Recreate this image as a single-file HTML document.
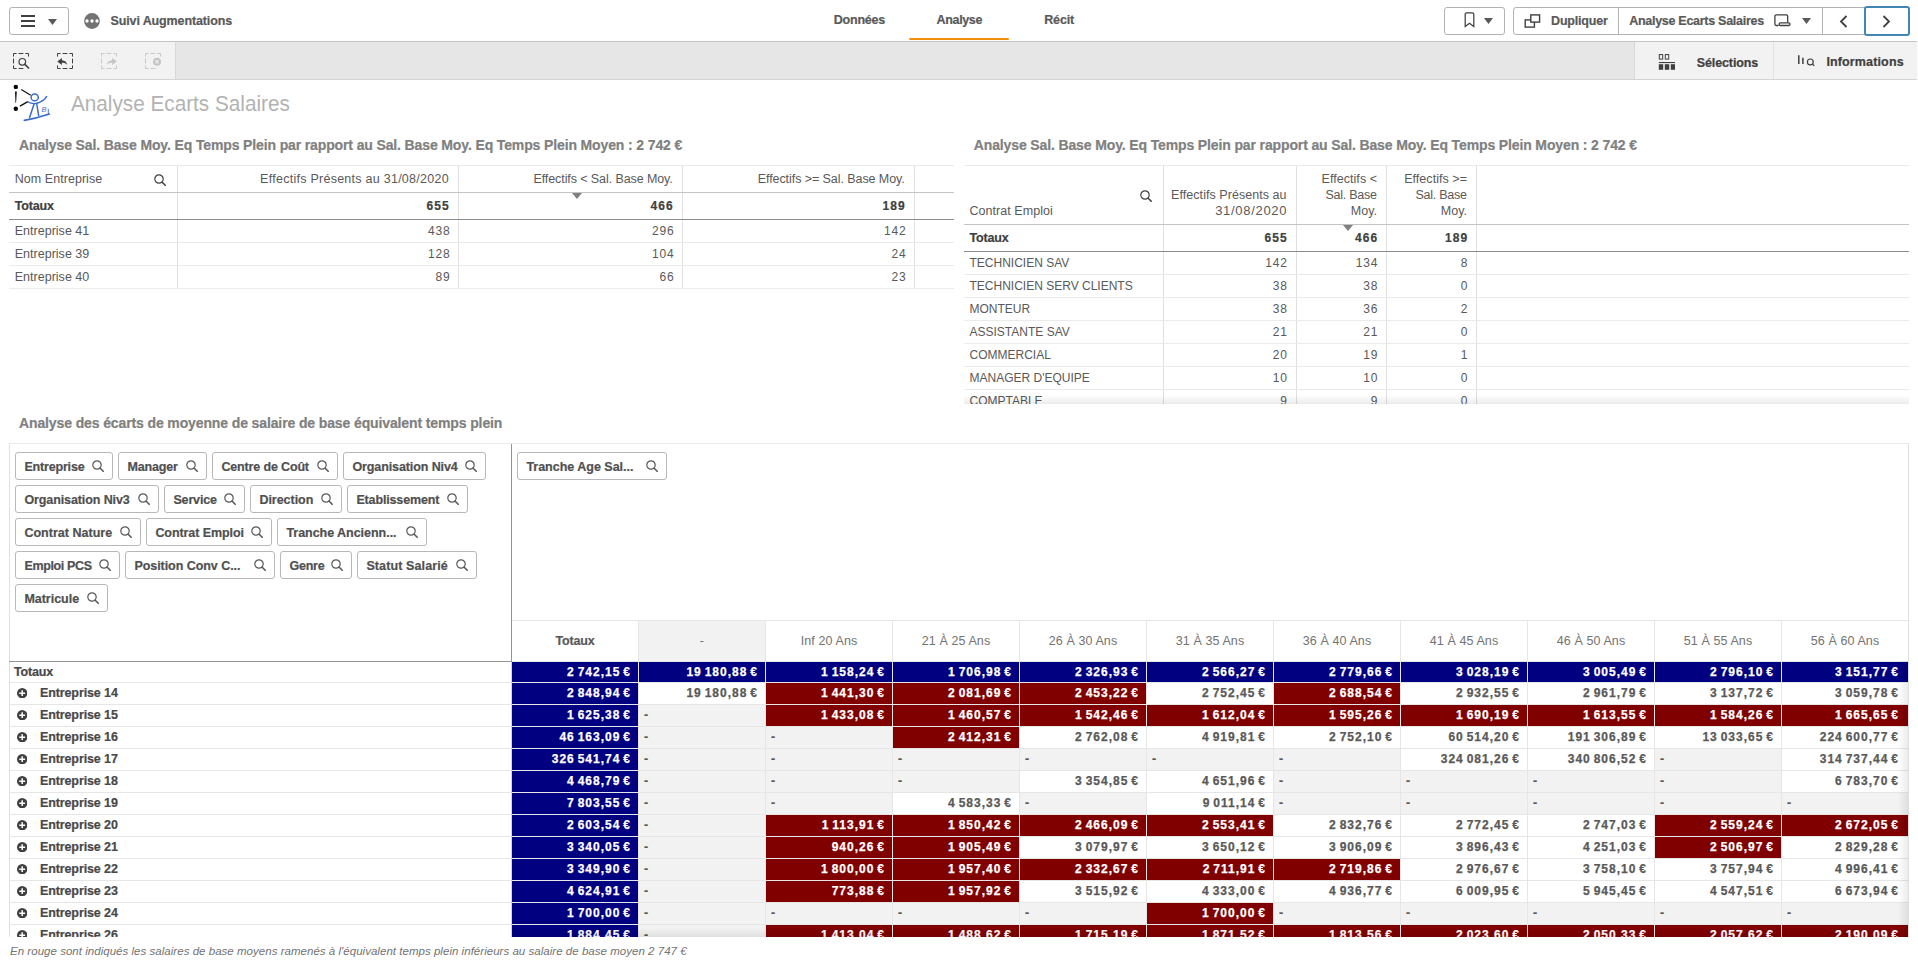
<!DOCTYPE html><html lang="fr"><head><meta charset="utf-8"><title>Suivi Augmentations</title><style>
*{box-sizing:border-box}
html,body{margin:0;padding:0}
body{width:1918px;height:967px;overflow:hidden;background:#fff;font-family:"Liberation Sans",sans-serif;color:#595959;position:relative}
.a{position:absolute}
.t{position:absolute;white-space:nowrap;line-height:1}
.b{font-weight:bold}
.r{text-align:right}
.btn{position:absolute;top:7px;height:28px;border:1px solid #b3b3b3;border-radius:3px;background:#fff}
.hl{position:absolute;height:1px}
.vl{position:absolute;width:1px}
.pill{position:absolute;height:28px;border:1px solid #b8b8b8;border-radius:3px;background:#fff}
.c{position:absolute;height:21px}
.N{background:#000080}
.R{background:#800000}
.G{background:#f2f2f2}
</style></head><body>
<div class="btn" style="left:9px;width:60px"></div>
<div class="a" style="left:21px;top:15px;width:14px;height:2px;background:#404040"></div><div class="a" style="left:21px;top:20px;width:14px;height:2px;background:#404040"></div><div class="a" style="left:21px;top:25px;width:14px;height:2px;background:#404040"></div>
<svg class="a" style="left:47.6px;top:19px" width="9" height="6" viewBox="0 0 9 6"><path d="M0 0h9L4.5 6z" fill="#595959"/></svg>
<svg class="a" style="left:84px;top:13px" width="17" height="17" viewBox="0 0 17 17"><circle cx="8" cy="8" r="7.9" fill="#737373"/><circle cx="3" cy="8" r="1.65" fill="#fff"/><circle cx="8" cy="8" r="1.65" fill="#fff"/><circle cx="13" cy="8" r="1.65" fill="#fff"/></svg>
<div class="t" style="top:14.75px;font-size:12.5px;color:#595959;letter-spacing:-0.12px;font-weight:bold;-webkit-text-stroke:0.2px #595959;left:110.5px;">Suivi Augmentations</div>
<div class="t" style="top:13.75px;font-size:12.5px;color:#595959;letter-spacing:-0.24px;font-weight:bold;-webkit-text-stroke:0.2px #595959;left:833.8px;">Données</div>
<div class="t" style="top:13.75px;font-size:12.5px;color:#595959;letter-spacing:-0.36px;font-weight:bold;-webkit-text-stroke:0.2px #595959;left:936.6px;">Analyse</div>
<div class="t" style="top:13.75px;font-size:12.5px;color:#595959;letter-spacing:-0.12px;font-weight:bold;-webkit-text-stroke:0.2px #595959;left:1044.2px;">Récit</div>
<div class="a" style="left:909px;top:38px;width:100px;height:2px;background:#f0900a;border-radius:1px"></div>
<div class="btn" style="left:1444px;width:61px"></div>
<svg class="a" style="left:1464px;top:12px" width="11" height="16" viewBox="0 0 11 16"><path d="M1.2 14.6V2.2q0-1.4 1.4-1.4h5.8q1.4 0 1.4 1.4V14.6L5.5 11.3z" fill="none" stroke="#404040" stroke-width="1.25"/></svg>
<svg class="a" style="left:1484px;top:18px" width="9" height="6" viewBox="0 0 9 6"><path d="M0 0h9L4.5 6z" fill="#595959"/></svg>
<div class="btn" style="left:1513px;width:396px"></div>
<div class="vl" style="left:1618px;top:8px;height:26px;background:#b3b3b3"></div>
<div class="vl" style="left:1822px;top:8px;height:26px;background:#b3b3b3"></div>
<div class="a" style="left:1864px;top:6px;width:46px;height:30px;border:2px solid #4287b3;border-radius:3px;background:#fff"></div>
<svg class="a" style="left:1524px;top:14px" width="17" height="15" viewBox="0 0 17 15"><rect x="1.2" y="5.9" width="9.2" height="7.2" fill="none" stroke="#404040" stroke-width="1.4"/><rect x="6.8" y="0.9" width="8.8" height="7.2" fill="#fff" stroke="#404040" stroke-width="1.4"/></svg>
<div class="t" style="top:14.75px;font-size:12.5px;color:#595959;letter-spacing:-0.2px;font-weight:bold;-webkit-text-stroke:0.2px #595959;left:1551.1px;">Dupliquer</div>
<div class="t" style="top:14.75px;font-size:12.5px;color:#595959;letter-spacing:-0.28px;font-weight:bold;-webkit-text-stroke:0.2px #595959;left:1629.2px;">Analyse Ecarts Salaires</div>
<svg class="a" style="left:1774px;top:14px" width="18" height="14" viewBox="0 0 18 14"><path d="M4.6 11.5H2.3q-1.4 0-1.4-1.4V2.3q0-1.4 1.4-1.4h10q1.4 0 1.4 1.4V8.6" fill="none" stroke="#404040" stroke-width="1.3"/><rect x="5.2" y="8.8" width="10.8" height="2.7" rx="1.2" fill="#fff" stroke="#404040" stroke-width="1.3"/></svg>
<svg class="a" style="left:1802px;top:18px" width="9" height="6" viewBox="0 0 9 6"><path d="M0 0h9L4.5 6z" fill="#595959"/></svg>
<svg class="a" style="left:1839.4px;top:14.5px" width="9" height="13" viewBox="0 0 9 13"><path d="M7.5 1L2 6.5 7.5 12" fill="none" stroke="#404040" stroke-width="1.8"/></svg>
<svg class="a" style="left:1882.4px;top:14.5px" width="9" height="13" viewBox="0 0 9 13"><path d="M1.5 1L7 6.5 1.5 12" fill="none" stroke="#404040" stroke-width="1.8"/></svg>
<div class="hl" style="left:0px;top:41px;width:1918px;background:#c4c4c4"></div>
<div class="a" style="left:0;top:42px;width:1918px;height:37px;background:#e6e6e6"></div>
<div class="a" style="left:0;top:42px;width:175px;height:37px;background:#f2f2f2"></div>
<div class="vl" style="left:175px;top:42px;height:37px;background:#d9d9d9"></div>
<div class="a" style="left:1635px;top:42px;width:283px;height:37px;background:#f2f2f2"></div>
<div class="vl" style="left:1634px;top:42px;height:37px;background:#d9d9d9"></div>
<div class="vl" style="left:1773px;top:42px;height:37px;background:#e2e2e2"></div>
<div class="hl" style="left:0px;top:79px;width:1918px;background:#d4d4d4"></div>
<div class="vl" style="left:1917px;top:41px;height:39px;background:#fafafa"></div>
<svg class="a" style="left:13px;top:53px" width="17" height="17" viewBox="0 0 17 17"><path d="M0.5 3.6V0.5H3.6 M12.4 0.5H15.5V3.6 M3.6 15.5H0.5V12.4 M5.6 0.5h4.8 M5.6 15.5h4.8 M0.5 5.6v4.8" fill="none" stroke="#404040" stroke-width="1"/><circle cx="9.3" cy="8.8" r="3.3" fill="none" stroke="#404040" stroke-width="1.2"/><path d="M11.8 11.3L15.6 15" stroke="#404040" stroke-width="1.7" stroke-linecap="round"/></svg>
<svg class="a" style="left:57px;top:53px" width="17" height="17" viewBox="0 0 17 17"><path d="M0.5 3.6V0.5H3.6 M12.4 0.5H15.5V3.6 M15.5 12.4V15.5H12.4 M3.6 15.5H0.5V12.4 M5.6 0.5h4.8 M5.6 15.5h4.8 M15.5 5.6v4.8" fill="none" stroke="#404040" stroke-width="1"/><path d="M0.3 8.4L4.9 4.9v2.3c3 0.2 4.9 1.6 5.3 4.7-1.4-1.6-2.9-2.1-5.3-2.1v2.2z" fill="#404040"/></svg>
<svg class="a" style="left:101px;top:53px" width="17" height="17" viewBox="0 0 17 17"><path d="M0.5 3.6V0.5H3.6 M12.4 0.5H15.5V3.6 M15.5 12.4V15.5H12.4 M3.6 15.5H0.5V12.4 M5.6 0.5h4.8 M5.6 15.5h4.8 M0.5 5.6v4.8" fill="none" stroke="#c9c9c9" stroke-width="1"/><path d="M15.8 8.4L11.2 4.9v2.3c-3 0.2-4.9 1.6-5.3 4.7 1.4-1.6 2.9-2.1 5.3-2.1v2.2z" fill="#c4c4c4"/></svg>
<svg class="a" style="left:145px;top:53px" width="17" height="17" viewBox="0 0 17 17"><path d="M0.5 3.6V0.5H3.6 M12.4 0.5H15.5V3.6 M3.6 15.5H0.5V12.4 M5.6 0.5h4.8 M5.6 15.5h4.8 M0.5 5.6v4.8" fill="none" stroke="#c9c9c9" stroke-width="1"/><circle cx="12" cy="8.8" r="4" fill="#c4c4c4"/><path d="M10.4 7.2l3.2 3.2M13.6 7.2l-3.2 3.2" stroke="#f2f2f2" stroke-width="1.1"/></svg>
<svg class="a" style="left:1658px;top:53px" width="18" height="18" viewBox="0 0 18 18"><rect x="1.3" y="1.6" width="3.4" height="4.5" fill="none" stroke="#404040" stroke-width="1"/><rect x="7.3" y="1.6" width="3.4" height="4.5" fill="none" stroke="#404040" stroke-width="1"/><rect x="0.8" y="9" width="16.2" height="1.1" fill="#404040"/><rect x="0.8" y="11.2" width="4.4" height="5.6" fill="#404040"/><rect x="6.8" y="11.2" width="4.4" height="5.6" fill="#404040"/><rect x="12.8" y="11.2" width="4.2" height="5.6" fill="#404040"/></svg>
<div class="t" style="top:56.75px;font-size:12.5px;color:#404040;letter-spacing:-0.1px;font-weight:bold;-webkit-text-stroke:0.2px #404040;left:1696.7px;">Sélections</div>
<svg class="a" style="left:1797px;top:55px" width="19" height="13" viewBox="0 0 19 13"><path d="M1.8 0.2v8.8M5.9 2.7v6.3" stroke="#404040" stroke-width="1.5"/><circle cx="13.3" cy="6.9" r="2.9" fill="none" stroke="#404040" stroke-width="1.2"/><path d="M15.5 9.1L17.3 10.9" stroke="#404040" stroke-width="1.3"/></svg>
<div class="t" style="top:55.75px;font-size:12.5px;color:#404040;letter-spacing:0.14px;font-weight:bold;-webkit-text-stroke:0.2px #404040;left:1826.4px;">Informations</div>
<svg class="a" style="left:10px;top:82px" width="44" height="42" viewBox="0 0 44 42"><circle cx="5.8" cy="4.9" r="2.2" fill="#000"/><circle cx="5.8" cy="26.7" r="2.2" fill="#000"/><path d="M4.9 9.6h2L6.1 20.8h-0.7z" fill="#222"/><path d="M11.3 7.6L20.7 13.2" stroke="#111" stroke-width="1.2"/><path d="M10 24.2L17.8 19.7" stroke="#111" stroke-width="1.4"/><ellipse cx="24.7" cy="15.4" rx="3.6" ry="3.4" fill="none" stroke="#3a6acd" stroke-width="1.5"/><path d="M17.8 19.8C22 22.4 27 21.6 30 20.2S35.6 16.6 36.9 14" fill="none" stroke="#3a6acd" stroke-width="1.3"/><path d="M24.4 21L19.4 36M26.6 21L28.7 34" fill="none" stroke="#3a6acd" stroke-width="1.5"/><path d="M14.3 38.4Q26 36.4 39.4 32" fill="none" stroke="#3a6acd" stroke-width="1.6" stroke-linecap="round"/><path d="M38.3 27v5.8" stroke="#3a6acd" stroke-width="0.9"/><text x="31.6" y="30.4" font-size="7.5" font-style="italic" fill="#3a6acd" font-family="Liberation Sans,sans-serif">B</text></svg>
<div class="t" style="top:91.60px;font-size:22.8px;color:#b3b3b3;left:70.6px;transform:scaleX(0.909);transform-origin:0 0;">Analyse Ecarts Salaires</div>
<div class="t" style="top:138.00px;font-size:14px;color:#808080;letter-spacing:-0.13px;font-weight:bold;-webkit-text-stroke:0.2px #808080;left:19px;">Analyse Sal. Base Moy. Eq Temps Plein par rapport au Sal. Base Moy. Eq Temps Plein Moyen : 2 742 €</div>
<div class="t" style="top:138.00px;font-size:14px;color:#808080;letter-spacing:-0.13px;font-weight:bold;-webkit-text-stroke:0.2px #808080;left:973.8px;">Analyse Sal. Base Moy. Eq Temps Plein par rapport au Sal. Base Moy. Eq Temps Plein Moyen : 2 742 €</div>
<div class="vl" style="left:177px;top:166px;height:123px;background:#e0e0e0"></div>
<div class="vl" style="left:458px;top:166px;height:123px;background:#e0e0e0"></div>
<div class="vl" style="left:682px;top:166px;height:123px;background:#e0e0e0"></div>
<div class="vl" style="left:914px;top:166px;height:123px;background:#e0e0e0"></div>
<div class="hl" style="left:9px;top:165px;width:945px;background:#ebebeb"></div>
<div class="hl" style="left:9px;top:192px;width:945px;background:#c4c4c4"></div>
<div class="hl" style="left:9px;top:219px;width:945px;background:#8c8c8c"></div>
<div class="hl" style="left:9px;top:242px;width:945px;background:#ebebeb"></div>
<div class="hl" style="left:9px;top:265px;width:945px;background:#ebebeb"></div>
<div class="hl" style="left:9px;top:288px;width:945px;background:#ebebeb"></div>
<div class="t" style="top:172.75px;font-size:12.5px;color:#595959;letter-spacing:0.05px;left:14.7px;">Nom Entreprise</div>
<svg style="position:absolute;left:154px;top:174px" width="12" height="12" viewBox="0 0 12 12"><circle cx="5" cy="5" r="4.2" fill="none" stroke="#404040" stroke-width="1.2"/><path d="M8.2 8.2L11.2 11.2" stroke="#404040" stroke-width="1.6" stroke-linecap="round"/></svg>
<div class="t" style="top:172.75px;font-size:12.5px;color:#595959;letter-spacing:0.26px;right:1469.14px;">Effectifs Présents au 31/08/2020</div>
<div class="t" style="top:172.75px;font-size:12.5px;color:#595959;letter-spacing:-0.09px;right:1245.29px;">Effectifs &lt; Sal. Base Moy.</div>
<div class="t" style="top:172.75px;font-size:12.5px;color:#595959;letter-spacing:-0.07px;right:1013.27px;">Effectifs &gt;= Sal. Base Moy.</div>
<svg class="a" style="left:572px;top:193px" width="10" height="6" viewBox="0 0 10 6"><path d="M0 0h10L5 6z" fill="#808080"/></svg>
<div class="t" style="top:199.75px;font-size:12.5px;color:#404040;letter-spacing:-0.17px;font-weight:bold;-webkit-text-stroke:0.2px #404040;left:14.7px;">Totaux</div>
<div class="t" style="top:200.00px;font-size:12px;color:#404040;letter-spacing:1.0px;font-weight:bold;-webkit-text-stroke:0.2px #404040;right:1468.40px;">655</div>
<div class="t" style="top:200.00px;font-size:12px;color:#404040;letter-spacing:1.0px;font-weight:bold;-webkit-text-stroke:0.2px #404040;right:1244.40px;">466</div>
<div class="t" style="top:200.00px;font-size:12px;color:#404040;letter-spacing:1.0px;font-weight:bold;-webkit-text-stroke:0.2px #404040;right:1012.40px;">189</div>
<div class="t" style="top:224.75px;font-size:12.5px;color:#595959;letter-spacing:0.02px;left:14.7px;">Entreprise 41</div>
<div class="t" style="top:225.00px;font-size:12px;color:#595959;letter-spacing:0.85px;right:1467.45px;">438</div>
<div class="t" style="top:225.00px;font-size:12px;color:#595959;letter-spacing:0.85px;right:1243.45px;">296</div>
<div class="t" style="top:225.00px;font-size:12px;color:#595959;letter-spacing:0.85px;right:1011.45px;">142</div>
<div class="t" style="top:247.75px;font-size:12.5px;color:#595959;letter-spacing:0.02px;left:14.7px;">Entreprise 39</div>
<div class="t" style="top:248.00px;font-size:12px;color:#595959;letter-spacing:0.85px;right:1467.45px;">128</div>
<div class="t" style="top:248.00px;font-size:12px;color:#595959;letter-spacing:0.85px;right:1243.45px;">104</div>
<div class="t" style="top:248.00px;font-size:12px;color:#595959;letter-spacing:0.85px;right:1011.45px;">24</div>
<div class="t" style="top:270.75px;font-size:12.5px;color:#595959;letter-spacing:0.02px;left:14.7px;">Entreprise 40</div>
<div class="t" style="top:271.00px;font-size:12px;color:#595959;letter-spacing:0.85px;right:1467.45px;">89</div>
<div class="t" style="top:271.00px;font-size:12px;color:#595959;letter-spacing:0.85px;right:1243.45px;">66</div>
<div class="t" style="top:271.00px;font-size:12px;color:#595959;letter-spacing:0.85px;right:1011.45px;">23</div>
<div class="vl" style="left:1163px;top:166px;height:238px;background:#e0e0e0"></div>
<div class="vl" style="left:1296px;top:166px;height:238px;background:#e0e0e0"></div>
<div class="vl" style="left:1386px;top:166px;height:238px;background:#e0e0e0"></div>
<div class="vl" style="left:1476px;top:166px;height:238px;background:#e0e0e0"></div>
<div class="hl" style="left:964px;top:165px;width:945px;background:#ebebeb"></div>
<div class="hl" style="left:964px;top:224px;width:945px;background:#c4c4c4"></div>
<div class="hl" style="left:964px;top:251px;width:945px;background:#8c8c8c"></div>
<div class="hl" style="left:964px;top:274px;width:945px;background:#ebebeb"></div>
<div class="hl" style="left:964px;top:297px;width:945px;background:#ebebeb"></div>
<div class="hl" style="left:964px;top:320px;width:945px;background:#ebebeb"></div>
<div class="hl" style="left:964px;top:343px;width:945px;background:#ebebeb"></div>
<div class="hl" style="left:964px;top:366px;width:945px;background:#ebebeb"></div>
<div class="hl" style="left:964px;top:389px;width:945px;background:#ebebeb"></div>
<div class="t" style="top:204.75px;font-size:12.5px;color:#595959;letter-spacing:0.05px;left:969.5px;">Contrat Emploi</div>
<svg style="position:absolute;left:1140px;top:190px" width="12" height="12" viewBox="0 0 12 12"><circle cx="5" cy="5" r="4.2" fill="none" stroke="#404040" stroke-width="1.2"/><path d="M8.2 8.2L11.2 11.2" stroke="#404040" stroke-width="1.6" stroke-linecap="round"/></svg>
<div class="t" style="top:188.75px;font-size:12.5px;color:#595959;letter-spacing:0.05px;right:631.45px;">Effectifs Présents au</div>
<div class="t" style="top:204.00px;font-size:13px;color:#595959;letter-spacing:0.7px;right:630.80px;">31/08/2020</div>
<div class="t" style="top:172.75px;font-size:12.5px;color:#595959;letter-spacing:0.05px;right:540.95px;">Effectifs &lt;</div>
<div class="t" style="top:188.75px;font-size:12.5px;color:#595959;letter-spacing:-0.25px;right:541.25px;">Sal. Base</div>
<div class="t" style="top:204.75px;font-size:12.5px;color:#595959;letter-spacing:0.05px;right:540.95px;">Moy.</div>
<div class="t" style="top:172.75px;font-size:12.5px;color:#595959;letter-spacing:0.05px;right:450.95px;">Effectifs &gt;=</div>
<div class="t" style="top:188.75px;font-size:12.5px;color:#595959;letter-spacing:-0.25px;right:451.25px;">Sal. Base</div>
<div class="t" style="top:204.75px;font-size:12.5px;color:#595959;letter-spacing:0.05px;right:450.95px;">Moy.</div>
<svg class="a" style="left:1343px;top:225px" width="10" height="6" viewBox="0 0 10 6"><path d="M0 0h10L5 6z" fill="#808080"/></svg>
<div class="t" style="top:231.75px;font-size:12.5px;color:#404040;letter-spacing:-0.17px;font-weight:bold;-webkit-text-stroke:0.2px #404040;left:969.5px;">Totaux</div>
<div class="t" style="top:232.00px;font-size:12px;color:#404040;letter-spacing:1.0px;font-weight:bold;-webkit-text-stroke:0.2px #404040;right:630.40px;">655</div>
<div class="t" style="top:232.00px;font-size:12px;color:#404040;letter-spacing:1.0px;font-weight:bold;-webkit-text-stroke:0.2px #404040;right:539.90px;">466</div>
<div class="t" style="top:232.00px;font-size:12px;color:#404040;letter-spacing:1.0px;font-weight:bold;-webkit-text-stroke:0.2px #404040;right:449.90px;">189</div>
<div class="a" style="left:964px;top:252px;width:945px;height:152px;overflow:hidden">
<div class="t" style="top:5.00px;font-size:12px;color:#595959;left:5.5px;">TECHNICIEN SAV</div>
<div class="t" style="top:5.00px;right:621.15px;font-size:12px;letter-spacing:0.85px">142</div>
<div class="t" style="top:5.00px;right:530.65px;font-size:12px;letter-spacing:0.85px">134</div>
<div class="t" style="top:5.00px;right:440.65px;font-size:12px;letter-spacing:0.85px">8</div>
<div class="t" style="top:28.00px;font-size:12px;color:#595959;left:5.5px;">TECHNICIEN SERV CLIENTS</div>
<div class="t" style="top:28.00px;right:621.15px;font-size:12px;letter-spacing:0.85px">38</div>
<div class="t" style="top:28.00px;right:530.65px;font-size:12px;letter-spacing:0.85px">38</div>
<div class="t" style="top:28.00px;right:440.65px;font-size:12px;letter-spacing:0.85px">0</div>
<div class="t" style="top:51.00px;font-size:12px;color:#595959;left:5.5px;">MONTEUR</div>
<div class="t" style="top:51.00px;right:621.15px;font-size:12px;letter-spacing:0.85px">38</div>
<div class="t" style="top:51.00px;right:530.65px;font-size:12px;letter-spacing:0.85px">36</div>
<div class="t" style="top:51.00px;right:440.65px;font-size:12px;letter-spacing:0.85px">2</div>
<div class="t" style="top:74.00px;font-size:12px;color:#595959;left:5.5px;">ASSISTANTE SAV</div>
<div class="t" style="top:74.00px;right:621.15px;font-size:12px;letter-spacing:0.85px">21</div>
<div class="t" style="top:74.00px;right:530.65px;font-size:12px;letter-spacing:0.85px">21</div>
<div class="t" style="top:74.00px;right:440.65px;font-size:12px;letter-spacing:0.85px">0</div>
<div class="t" style="top:97.00px;font-size:12px;color:#595959;left:5.5px;">COMMERCIAL</div>
<div class="t" style="top:97.00px;right:621.15px;font-size:12px;letter-spacing:0.85px">20</div>
<div class="t" style="top:97.00px;right:530.65px;font-size:12px;letter-spacing:0.85px">19</div>
<div class="t" style="top:97.00px;right:440.65px;font-size:12px;letter-spacing:0.85px">1</div>
<div class="t" style="top:120.00px;font-size:12px;color:#595959;left:5.5px;">MANAGER D'EQUIPE</div>
<div class="t" style="top:120.00px;right:621.15px;font-size:12px;letter-spacing:0.85px">10</div>
<div class="t" style="top:120.00px;right:530.65px;font-size:12px;letter-spacing:0.85px">10</div>
<div class="t" style="top:120.00px;right:440.65px;font-size:12px;letter-spacing:0.85px">0</div>
<div class="t" style="top:143.00px;font-size:12px;color:#595959;left:5.5px;">COMPTABLE</div>
<div class="t" style="top:143.00px;right:621.15px;font-size:12px;letter-spacing:0.85px">9</div>
<div class="t" style="top:143.00px;right:530.65px;font-size:12px;letter-spacing:0.85px">9</div>
<div class="t" style="top:143.00px;right:440.65px;font-size:12px;letter-spacing:0.85px">0</div>
<div class="a" style="left:0;bottom:0;width:945px;height:9px;background:linear-gradient(to bottom,rgba(0,0,0,0),rgba(0,0,0,0.08))"></div>
</div>
<div class="t" style="top:416.00px;font-size:14px;color:#808080;letter-spacing:-0.12px;font-weight:bold;-webkit-text-stroke:0.2px #808080;left:19px;">Analyse des écarts de moyenne de salaire de base équivalent temps plein</div>
<div class="hl" style="left:9px;top:443px;width:1900px;background:#ebebeb"></div>
<div class="vl" style="left:9px;top:443px;height:494px;background:#e0e0e0"></div>
<div class="vl" style="left:1908px;top:443px;height:494px;background:#e0e0e0"></div>
<div class="pill" style="left:15px;top:452px;width:98px"></div>
<div class="t" style="top:460.75px;font-size:12.5px;color:#505050;letter-spacing:-0.18px;font-weight:bold;-webkit-text-stroke:0.2px #505050;left:24.4px;">Entreprise</div>
<svg style="position:absolute;left:92.1px;top:460.3px" width="12" height="12" viewBox="0 0 12 12"><circle cx="5" cy="5" r="4.2" fill="none" stroke="#595959" stroke-width="1.2"/><path d="M8.2 8.2L11.2 11.2" stroke="#595959" stroke-width="1.6" stroke-linecap="round"/></svg>
<div class="pill" style="left:118px;top:452px;width:89px"></div>
<div class="t" style="top:460.75px;font-size:12.5px;color:#505050;letter-spacing:-0.15px;font-weight:bold;-webkit-text-stroke:0.2px #505050;left:127.4px;">Manager</div>
<svg style="position:absolute;left:186.1px;top:460.3px" width="12" height="12" viewBox="0 0 12 12"><circle cx="5" cy="5" r="4.2" fill="none" stroke="#595959" stroke-width="1.2"/><path d="M8.2 8.2L11.2 11.2" stroke="#595959" stroke-width="1.6" stroke-linecap="round"/></svg>
<div class="pill" style="left:212px;top:452px;width:126px"></div>
<div class="t" style="top:460.75px;font-size:12.5px;color:#505050;letter-spacing:-0.15px;font-weight:bold;-webkit-text-stroke:0.2px #505050;left:221.4px;">Centre de Coût</div>
<svg style="position:absolute;left:317.1px;top:460.3px" width="12" height="12" viewBox="0 0 12 12"><circle cx="5" cy="5" r="4.2" fill="none" stroke="#595959" stroke-width="1.2"/><path d="M8.2 8.2L11.2 11.2" stroke="#595959" stroke-width="1.6" stroke-linecap="round"/></svg>
<div class="pill" style="left:343px;top:452px;width:143px"></div>
<div class="t" style="top:460.75px;font-size:12.5px;color:#505050;letter-spacing:-0.1px;font-weight:bold;-webkit-text-stroke:0.2px #505050;left:352.4px;">Organisation Niv4</div>
<svg style="position:absolute;left:465.1px;top:460.3px" width="12" height="12" viewBox="0 0 12 12"><circle cx="5" cy="5" r="4.2" fill="none" stroke="#595959" stroke-width="1.2"/><path d="M8.2 8.2L11.2 11.2" stroke="#595959" stroke-width="1.6" stroke-linecap="round"/></svg>
<div class="pill" style="left:15px;top:485px;width:144px"></div>
<div class="t" style="top:493.75px;font-size:12.5px;color:#505050;letter-spacing:-0.1px;font-weight:bold;-webkit-text-stroke:0.2px #505050;left:24.4px;">Organisation Niv3</div>
<svg style="position:absolute;left:138.1px;top:493.3px" width="12" height="12" viewBox="0 0 12 12"><circle cx="5" cy="5" r="4.2" fill="none" stroke="#595959" stroke-width="1.2"/><path d="M8.2 8.2L11.2 11.2" stroke="#595959" stroke-width="1.6" stroke-linecap="round"/></svg>
<div class="pill" style="left:164px;top:485px;width:81px"></div>
<div class="t" style="top:493.75px;font-size:12.5px;color:#505050;letter-spacing:-0.15px;font-weight:bold;-webkit-text-stroke:0.2px #505050;left:173.4px;">Service</div>
<svg style="position:absolute;left:224.1px;top:493.3px" width="12" height="12" viewBox="0 0 12 12"><circle cx="5" cy="5" r="4.2" fill="none" stroke="#595959" stroke-width="1.2"/><path d="M8.2 8.2L11.2 11.2" stroke="#595959" stroke-width="1.6" stroke-linecap="round"/></svg>
<div class="pill" style="left:250px;top:485px;width:92px"></div>
<div class="t" style="top:493.75px;font-size:12.5px;color:#505050;letter-spacing:-0.03px;font-weight:bold;-webkit-text-stroke:0.2px #505050;left:259.4px;">Direction</div>
<svg style="position:absolute;left:321.1px;top:493.3px" width="12" height="12" viewBox="0 0 12 12"><circle cx="5" cy="5" r="4.2" fill="none" stroke="#595959" stroke-width="1.2"/><path d="M8.2 8.2L11.2 11.2" stroke="#595959" stroke-width="1.6" stroke-linecap="round"/></svg>
<div class="pill" style="left:347px;top:485px;width:121px"></div>
<div class="t" style="top:493.75px;font-size:12.5px;color:#505050;letter-spacing:-0.15px;font-weight:bold;-webkit-text-stroke:0.2px #505050;left:356.4px;">Etablissement</div>
<svg style="position:absolute;left:447.1px;top:493.3px" width="12" height="12" viewBox="0 0 12 12"><circle cx="5" cy="5" r="4.2" fill="none" stroke="#595959" stroke-width="1.2"/><path d="M8.2 8.2L11.2 11.2" stroke="#595959" stroke-width="1.6" stroke-linecap="round"/></svg>
<div class="pill" style="left:15px;top:518px;width:126px"></div>
<div class="t" style="top:526.75px;font-size:12.5px;color:#505050;letter-spacing:0.02px;font-weight:bold;-webkit-text-stroke:0.2px #505050;left:24.4px;">Contrat Nature</div>
<svg style="position:absolute;left:120.1px;top:526.3px" width="12" height="12" viewBox="0 0 12 12"><circle cx="5" cy="5" r="4.2" fill="none" stroke="#595959" stroke-width="1.2"/><path d="M8.2 8.2L11.2 11.2" stroke="#595959" stroke-width="1.6" stroke-linecap="round"/></svg>
<div class="pill" style="left:146px;top:518px;width:126px"></div>
<div class="t" style="top:526.75px;font-size:12.5px;color:#505050;letter-spacing:-0.07px;font-weight:bold;-webkit-text-stroke:0.2px #505050;left:155.4px;">Contrat Emploi</div>
<svg style="position:absolute;left:251.1px;top:526.3px" width="12" height="12" viewBox="0 0 12 12"><circle cx="5" cy="5" r="4.2" fill="none" stroke="#595959" stroke-width="1.2"/><path d="M8.2 8.2L11.2 11.2" stroke="#595959" stroke-width="1.6" stroke-linecap="round"/></svg>
<div class="pill" style="left:277px;top:518px;width:150px"></div>
<div class="t" style="top:526.75px;font-size:12.5px;color:#505050;letter-spacing:-0.03px;font-weight:bold;-webkit-text-stroke:0.2px #505050;left:286.4px;">Tranche Ancienn...</div>
<svg style="position:absolute;left:406.1px;top:526.3px" width="12" height="12" viewBox="0 0 12 12"><circle cx="5" cy="5" r="4.2" fill="none" stroke="#595959" stroke-width="1.2"/><path d="M8.2 8.2L11.2 11.2" stroke="#595959" stroke-width="1.6" stroke-linecap="round"/></svg>
<div class="pill" style="left:15px;top:551px;width:105px"></div>
<div class="t" style="top:559.75px;font-size:12.5px;color:#505050;letter-spacing:-0.35px;font-weight:bold;-webkit-text-stroke:0.2px #505050;left:24.4px;">Emploi PCS</div>
<svg style="position:absolute;left:99.1px;top:559.3px" width="12" height="12" viewBox="0 0 12 12"><circle cx="5" cy="5" r="4.2" fill="none" stroke="#595959" stroke-width="1.2"/><path d="M8.2 8.2L11.2 11.2" stroke="#595959" stroke-width="1.6" stroke-linecap="round"/></svg>
<div class="pill" style="left:125px;top:551px;width:150px"></div>
<div class="t" style="top:559.75px;font-size:12.5px;color:#505050;letter-spacing:-0.05px;font-weight:bold;-webkit-text-stroke:0.2px #505050;left:134.4px;">Position Conv C...</div>
<svg style="position:absolute;left:254.1px;top:559.3px" width="12" height="12" viewBox="0 0 12 12"><circle cx="5" cy="5" r="4.2" fill="none" stroke="#595959" stroke-width="1.2"/><path d="M8.2 8.2L11.2 11.2" stroke="#595959" stroke-width="1.6" stroke-linecap="round"/></svg>
<div class="pill" style="left:280px;top:551px;width:72px"></div>
<div class="t" style="top:559.75px;font-size:12.5px;color:#505050;letter-spacing:-0.2px;font-weight:bold;-webkit-text-stroke:0.2px #505050;left:289.4px;">Genre</div>
<svg style="position:absolute;left:331.1px;top:559.3px" width="12" height="12" viewBox="0 0 12 12"><circle cx="5" cy="5" r="4.2" fill="none" stroke="#595959" stroke-width="1.2"/><path d="M8.2 8.2L11.2 11.2" stroke="#595959" stroke-width="1.6" stroke-linecap="round"/></svg>
<div class="pill" style="left:357px;top:551px;width:120px"></div>
<div class="t" style="top:559.75px;font-size:12.5px;color:#505050;letter-spacing:0.11px;font-weight:bold;-webkit-text-stroke:0.2px #505050;left:366.4px;">Statut Salarié</div>
<svg style="position:absolute;left:456.1px;top:559.3px" width="12" height="12" viewBox="0 0 12 12"><circle cx="5" cy="5" r="4.2" fill="none" stroke="#595959" stroke-width="1.2"/><path d="M8.2 8.2L11.2 11.2" stroke="#595959" stroke-width="1.6" stroke-linecap="round"/></svg>
<div class="pill" style="left:15px;top:584px;width:93px"></div>
<div class="t" style="top:592.75px;font-size:12.5px;color:#505050;letter-spacing:-0.02px;font-weight:bold;-webkit-text-stroke:0.2px #505050;left:24.4px;">Matricule</div>
<svg style="position:absolute;left:87.1px;top:592.3px" width="12" height="12" viewBox="0 0 12 12"><circle cx="5" cy="5" r="4.2" fill="none" stroke="#595959" stroke-width="1.2"/><path d="M8.2 8.2L11.2 11.2" stroke="#595959" stroke-width="1.6" stroke-linecap="round"/></svg>
<div class="pill" style="left:517px;top:452px;width:150px"></div>
<div class="t" style="top:460.75px;font-size:12.5px;color:#505050;letter-spacing:-0.01px;font-weight:bold;-webkit-text-stroke:0.2px #505050;left:526.4px;">Tranche Age Sal...</div>
<svg style="position:absolute;left:646.1px;top:460.3px" width="12" height="12" viewBox="0 0 12 12"><circle cx="5" cy="5" r="4.2" fill="none" stroke="#595959" stroke-width="1.2"/><path d="M8.2 8.2L11.2 11.2" stroke="#595959" stroke-width="1.6" stroke-linecap="round"/></svg>
<div class="hl" style="left:512px;top:620px;width:1396px;background:#e6e6e6"></div>
<div class="a G" style="left:639px;top:621px;width:126px;height:40px"></div>
<div class="t b" style="left:512px;width:126px;text-align:center;top:634.75px;font-size:12.5px;letter-spacing:-0.17px;color:#595959;-webkit-text-stroke:0.2px #595959">Totaux</div>
<div class="vl" style="left:638px;top:621px;height:40px;background:#e6e6e6"></div>
<div class="t" style="left:639px;width:126px;text-align:center;top:634.75px;font-size:12.5px;letter-spacing:0.1px;color:#737373">-</div>
<div class="vl" style="left:765px;top:621px;height:40px;background:#e6e6e6"></div>
<div class="t" style="left:766px;width:126px;text-align:center;top:634.75px;font-size:12.5px;letter-spacing:0.1px;color:#737373">Inf 20 Ans</div>
<div class="vl" style="left:892px;top:621px;height:40px;background:#e6e6e6"></div>
<div class="t" style="left:893px;width:126px;text-align:center;top:634.75px;font-size:12.5px;letter-spacing:0.1px;color:#737373">21 À 25 Ans</div>
<div class="vl" style="left:1019px;top:621px;height:40px;background:#e6e6e6"></div>
<div class="t" style="left:1020px;width:126px;text-align:center;top:634.75px;font-size:12.5px;letter-spacing:0.1px;color:#737373">26 À 30 Ans</div>
<div class="vl" style="left:1146px;top:621px;height:40px;background:#e6e6e6"></div>
<div class="t" style="left:1147px;width:126px;text-align:center;top:634.75px;font-size:12.5px;letter-spacing:0.1px;color:#737373">31 À 35 Ans</div>
<div class="vl" style="left:1273px;top:621px;height:40px;background:#e6e6e6"></div>
<div class="t" style="left:1274px;width:126px;text-align:center;top:634.75px;font-size:12.5px;letter-spacing:0.1px;color:#737373">36 À 40 Ans</div>
<div class="vl" style="left:1400px;top:621px;height:40px;background:#e6e6e6"></div>
<div class="t" style="left:1401px;width:126px;text-align:center;top:634.75px;font-size:12.5px;letter-spacing:0.1px;color:#737373">41 À 45 Ans</div>
<div class="vl" style="left:1527px;top:621px;height:40px;background:#e6e6e6"></div>
<div class="t" style="left:1528px;width:126px;text-align:center;top:634.75px;font-size:12.5px;letter-spacing:0.1px;color:#737373">46 À 50 Ans</div>
<div class="vl" style="left:1654px;top:621px;height:40px;background:#e6e6e6"></div>
<div class="t" style="left:1655px;width:126px;text-align:center;top:634.75px;font-size:12.5px;letter-spacing:0.1px;color:#737373">51 À 55 Ans</div>
<div class="vl" style="left:1781px;top:621px;height:40px;background:#e6e6e6"></div>
<div class="t" style="left:1782px;width:126px;text-align:center;top:634.75px;font-size:12.5px;letter-spacing:0.1px;color:#737373">56 À 60 Ans</div>
<div class="vl" style="left:511px;top:444px;height:217px;background:#949494"></div>
<div class="hl" style="left:9px;top:661px;width:503px;background:#949494"></div>
<div class="a" style="left:10px;top:661px;width:1898px;height:276px;overflow:hidden">
<div class="t" style="top:4.75px;font-size:12.5px;color:#484848;letter-spacing:-0.17px;font-weight:bold;-webkit-text-stroke:0.2px #484848;left:4px;">Totaux</div>
<div class="a N" style="left:502px;top:1px;width:126px;height:20px"></div>
<div class="t b" style="top:5.00px;right:1277.00px;font-size:12px;letter-spacing:1px;word-spacing:-1.4px;-webkit-text-stroke:0.25px #fff;color:#fff">2 742,15 €</div>
<div class="a N" style="left:629px;top:1px;width:126px;height:20px"></div>
<div class="t b" style="top:5.00px;right:1150.00px;font-size:12px;letter-spacing:1px;word-spacing:-1.4px;-webkit-text-stroke:0.25px #fff;color:#fff">19 180,88 €</div>
<div class="a N" style="left:756px;top:1px;width:126px;height:20px"></div>
<div class="t b" style="top:5.00px;right:1023.00px;font-size:12px;letter-spacing:1px;word-spacing:-1.4px;-webkit-text-stroke:0.25px #fff;color:#fff">1 158,24 €</div>
<div class="a N" style="left:883px;top:1px;width:126px;height:20px"></div>
<div class="t b" style="top:5.00px;right:896.00px;font-size:12px;letter-spacing:1px;word-spacing:-1.4px;-webkit-text-stroke:0.25px #fff;color:#fff">1 706,98 €</div>
<div class="a N" style="left:1010px;top:1px;width:126px;height:20px"></div>
<div class="t b" style="top:5.00px;right:769.00px;font-size:12px;letter-spacing:1px;word-spacing:-1.4px;-webkit-text-stroke:0.25px #fff;color:#fff">2 326,93 €</div>
<div class="a N" style="left:1137px;top:1px;width:126px;height:20px"></div>
<div class="t b" style="top:5.00px;right:642.00px;font-size:12px;letter-spacing:1px;word-spacing:-1.4px;-webkit-text-stroke:0.25px #fff;color:#fff">2 566,27 €</div>
<div class="a N" style="left:1264px;top:1px;width:126px;height:20px"></div>
<div class="t b" style="top:5.00px;right:515.00px;font-size:12px;letter-spacing:1px;word-spacing:-1.4px;-webkit-text-stroke:0.25px #fff;color:#fff">2 779,66 €</div>
<div class="a N" style="left:1391px;top:1px;width:126px;height:20px"></div>
<div class="t b" style="top:5.00px;right:388.00px;font-size:12px;letter-spacing:1px;word-spacing:-1.4px;-webkit-text-stroke:0.25px #fff;color:#fff">3 028,19 €</div>
<div class="a N" style="left:1518px;top:1px;width:126px;height:20px"></div>
<div class="t b" style="top:5.00px;right:261.00px;font-size:12px;letter-spacing:1px;word-spacing:-1.4px;-webkit-text-stroke:0.25px #fff;color:#fff">3 005,49 €</div>
<div class="a N" style="left:1645px;top:1px;width:126px;height:20px"></div>
<div class="t b" style="top:5.00px;right:134.00px;font-size:12px;letter-spacing:1px;word-spacing:-1.4px;-webkit-text-stroke:0.25px #fff;color:#fff">2 796,10 €</div>
<div class="a N" style="left:1772px;top:1px;width:126px;height:20px"></div>
<div class="t b" style="top:5.00px;right:9.00px;font-size:12px;letter-spacing:1px;word-spacing:-1.4px;-webkit-text-stroke:0.25px #fff;color:#fff">3 151,77 €</div>
<svg class="a" style="left:6.8px;top:26.8px" width="10.4" height="10.4" viewBox="0 0 11 11"><circle cx="5.5" cy="5.5" r="5.5" fill="#404040"/><path d="M5.5 2.4v6.2M2.4 5.5h6.2" stroke="#fff" stroke-width="1.6"/></svg>
<div class="t" style="top:25.75px;font-size:12.5px;color:#484848;letter-spacing:-0.1px;font-weight:bold;-webkit-text-stroke:0.2px #484848;left:29.9px;">Entreprise 14</div>
<div class="a N" style="left:502px;top:22px;width:126px;height:21px"></div>
<div class="t b" style="top:26.00px;right:1277.00px;font-size:12px;letter-spacing:1px;word-spacing:-1.4px;-webkit-text-stroke:0.25px #fff;color:#fff">2 848,94 €</div>
<div class="t b" style="top:26.00px;right:1150.00px;font-size:12px;letter-spacing:1px;word-spacing:-1.4px;-webkit-text-stroke:0.25px #595959;color:#595959">19 180,88 €</div>
<div class="a R" style="left:756px;top:22px;width:126px;height:21px"></div>
<div class="t b" style="top:26.00px;right:1023.00px;font-size:12px;letter-spacing:1px;word-spacing:-1.4px;-webkit-text-stroke:0.25px #fff;color:#fff">1 441,30 €</div>
<div class="a R" style="left:883px;top:22px;width:126px;height:21px"></div>
<div class="t b" style="top:26.00px;right:896.00px;font-size:12px;letter-spacing:1px;word-spacing:-1.4px;-webkit-text-stroke:0.25px #fff;color:#fff">2 081,69 €</div>
<div class="a R" style="left:1010px;top:22px;width:126px;height:21px"></div>
<div class="t b" style="top:26.00px;right:769.00px;font-size:12px;letter-spacing:1px;word-spacing:-1.4px;-webkit-text-stroke:0.25px #fff;color:#fff">2 453,22 €</div>
<div class="t b" style="top:26.00px;right:642.00px;font-size:12px;letter-spacing:1px;word-spacing:-1.4px;-webkit-text-stroke:0.25px #595959;color:#595959">2 752,45 €</div>
<div class="a R" style="left:1264px;top:22px;width:126px;height:21px"></div>
<div class="t b" style="top:26.00px;right:515.00px;font-size:12px;letter-spacing:1px;word-spacing:-1.4px;-webkit-text-stroke:0.25px #fff;color:#fff">2 688,54 €</div>
<div class="t b" style="top:26.00px;right:388.00px;font-size:12px;letter-spacing:1px;word-spacing:-1.4px;-webkit-text-stroke:0.25px #595959;color:#595959">2 932,55 €</div>
<div class="t b" style="top:26.00px;right:261.00px;font-size:12px;letter-spacing:1px;word-spacing:-1.4px;-webkit-text-stroke:0.25px #595959;color:#595959">2 961,79 €</div>
<div class="t b" style="top:26.00px;right:134.00px;font-size:12px;letter-spacing:1px;word-spacing:-1.4px;-webkit-text-stroke:0.25px #595959;color:#595959">3 137,72 €</div>
<div class="t b" style="top:26.00px;right:9.00px;font-size:12px;letter-spacing:1px;word-spacing:-1.4px;-webkit-text-stroke:0.25px #595959;color:#595959">3 059,78 €</div>
<svg class="a" style="left:6.8px;top:48.8px" width="10.4" height="10.4" viewBox="0 0 11 11"><circle cx="5.5" cy="5.5" r="5.5" fill="#404040"/><path d="M5.5 2.4v6.2M2.4 5.5h6.2" stroke="#fff" stroke-width="1.6"/></svg>
<div class="t" style="top:47.75px;font-size:12.5px;color:#484848;letter-spacing:-0.1px;font-weight:bold;-webkit-text-stroke:0.2px #484848;left:29.9px;">Entreprise 15</div>
<div class="a N" style="left:502px;top:44px;width:126px;height:21px"></div>
<div class="t b" style="top:48.00px;right:1277.00px;font-size:12px;letter-spacing:1px;word-spacing:-1.4px;-webkit-text-stroke:0.25px #fff;color:#fff">1 625,38 €</div>
<div class="a G" style="left:629px;top:44px;width:126px;height:21px"></div>
<div class="t" style="top:47.75px;font-size:12.5px;color:#595959;font-weight:bold;-webkit-text-stroke:0.2px #595959;left:634px;">-</div>
<div class="a R" style="left:756px;top:44px;width:126px;height:21px"></div>
<div class="t b" style="top:48.00px;right:1023.00px;font-size:12px;letter-spacing:1px;word-spacing:-1.4px;-webkit-text-stroke:0.25px #fff;color:#fff">1 433,08 €</div>
<div class="a R" style="left:883px;top:44px;width:126px;height:21px"></div>
<div class="t b" style="top:48.00px;right:896.00px;font-size:12px;letter-spacing:1px;word-spacing:-1.4px;-webkit-text-stroke:0.25px #fff;color:#fff">1 460,57 €</div>
<div class="a R" style="left:1010px;top:44px;width:126px;height:21px"></div>
<div class="t b" style="top:48.00px;right:769.00px;font-size:12px;letter-spacing:1px;word-spacing:-1.4px;-webkit-text-stroke:0.25px #fff;color:#fff">1 542,46 €</div>
<div class="a R" style="left:1137px;top:44px;width:126px;height:21px"></div>
<div class="t b" style="top:48.00px;right:642.00px;font-size:12px;letter-spacing:1px;word-spacing:-1.4px;-webkit-text-stroke:0.25px #fff;color:#fff">1 612,04 €</div>
<div class="a R" style="left:1264px;top:44px;width:126px;height:21px"></div>
<div class="t b" style="top:48.00px;right:515.00px;font-size:12px;letter-spacing:1px;word-spacing:-1.4px;-webkit-text-stroke:0.25px #fff;color:#fff">1 595,26 €</div>
<div class="a R" style="left:1391px;top:44px;width:126px;height:21px"></div>
<div class="t b" style="top:48.00px;right:388.00px;font-size:12px;letter-spacing:1px;word-spacing:-1.4px;-webkit-text-stroke:0.25px #fff;color:#fff">1 690,19 €</div>
<div class="a R" style="left:1518px;top:44px;width:126px;height:21px"></div>
<div class="t b" style="top:48.00px;right:261.00px;font-size:12px;letter-spacing:1px;word-spacing:-1.4px;-webkit-text-stroke:0.25px #fff;color:#fff">1 613,55 €</div>
<div class="a R" style="left:1645px;top:44px;width:126px;height:21px"></div>
<div class="t b" style="top:48.00px;right:134.00px;font-size:12px;letter-spacing:1px;word-spacing:-1.4px;-webkit-text-stroke:0.25px #fff;color:#fff">1 584,26 €</div>
<div class="a R" style="left:1772px;top:44px;width:126px;height:21px"></div>
<div class="t b" style="top:48.00px;right:9.00px;font-size:12px;letter-spacing:1px;word-spacing:-1.4px;-webkit-text-stroke:0.25px #fff;color:#fff">1 665,65 €</div>
<svg class="a" style="left:6.8px;top:70.8px" width="10.4" height="10.4" viewBox="0 0 11 11"><circle cx="5.5" cy="5.5" r="5.5" fill="#404040"/><path d="M5.5 2.4v6.2M2.4 5.5h6.2" stroke="#fff" stroke-width="1.6"/></svg>
<div class="t" style="top:69.75px;font-size:12.5px;color:#484848;letter-spacing:-0.1px;font-weight:bold;-webkit-text-stroke:0.2px #484848;left:29.9px;">Entreprise 16</div>
<div class="a N" style="left:502px;top:66px;width:126px;height:21px"></div>
<div class="t b" style="top:70.00px;right:1277.00px;font-size:12px;letter-spacing:1px;word-spacing:-1.4px;-webkit-text-stroke:0.25px #fff;color:#fff">46 163,09 €</div>
<div class="a G" style="left:629px;top:66px;width:126px;height:21px"></div>
<div class="t" style="top:69.75px;font-size:12.5px;color:#595959;font-weight:bold;-webkit-text-stroke:0.2px #595959;left:634px;">-</div>
<div class="a G" style="left:756px;top:66px;width:126px;height:21px"></div>
<div class="t" style="top:69.75px;font-size:12.5px;color:#595959;font-weight:bold;-webkit-text-stroke:0.2px #595959;left:761px;">-</div>
<div class="a R" style="left:883px;top:66px;width:126px;height:21px"></div>
<div class="t b" style="top:70.00px;right:896.00px;font-size:12px;letter-spacing:1px;word-spacing:-1.4px;-webkit-text-stroke:0.25px #fff;color:#fff">2 412,31 €</div>
<div class="t b" style="top:70.00px;right:769.00px;font-size:12px;letter-spacing:1px;word-spacing:-1.4px;-webkit-text-stroke:0.25px #595959;color:#595959">2 762,08 €</div>
<div class="t b" style="top:70.00px;right:642.00px;font-size:12px;letter-spacing:1px;word-spacing:-1.4px;-webkit-text-stroke:0.25px #595959;color:#595959">4 919,81 €</div>
<div class="t b" style="top:70.00px;right:515.00px;font-size:12px;letter-spacing:1px;word-spacing:-1.4px;-webkit-text-stroke:0.25px #595959;color:#595959">2 752,10 €</div>
<div class="t b" style="top:70.00px;right:388.00px;font-size:12px;letter-spacing:1px;word-spacing:-1.4px;-webkit-text-stroke:0.25px #595959;color:#595959">60 514,20 €</div>
<div class="t b" style="top:70.00px;right:261.00px;font-size:12px;letter-spacing:1px;word-spacing:-1.4px;-webkit-text-stroke:0.25px #595959;color:#595959">191 306,89 €</div>
<div class="t b" style="top:70.00px;right:134.00px;font-size:12px;letter-spacing:1px;word-spacing:-1.4px;-webkit-text-stroke:0.25px #595959;color:#595959">13 033,65 €</div>
<div class="t b" style="top:70.00px;right:9.00px;font-size:12px;letter-spacing:1px;word-spacing:-1.4px;-webkit-text-stroke:0.25px #595959;color:#595959">224 600,77 €</div>
<svg class="a" style="left:6.8px;top:92.8px" width="10.4" height="10.4" viewBox="0 0 11 11"><circle cx="5.5" cy="5.5" r="5.5" fill="#404040"/><path d="M5.5 2.4v6.2M2.4 5.5h6.2" stroke="#fff" stroke-width="1.6"/></svg>
<div class="t" style="top:91.75px;font-size:12.5px;color:#484848;letter-spacing:-0.1px;font-weight:bold;-webkit-text-stroke:0.2px #484848;left:29.9px;">Entreprise 17</div>
<div class="a N" style="left:502px;top:88px;width:126px;height:21px"></div>
<div class="t b" style="top:92.00px;right:1277.00px;font-size:12px;letter-spacing:1px;word-spacing:-1.4px;-webkit-text-stroke:0.25px #fff;color:#fff">326 541,74 €</div>
<div class="a G" style="left:629px;top:88px;width:126px;height:21px"></div>
<div class="t" style="top:91.75px;font-size:12.5px;color:#595959;font-weight:bold;-webkit-text-stroke:0.2px #595959;left:634px;">-</div>
<div class="a G" style="left:756px;top:88px;width:126px;height:21px"></div>
<div class="t" style="top:91.75px;font-size:12.5px;color:#595959;font-weight:bold;-webkit-text-stroke:0.2px #595959;left:761px;">-</div>
<div class="a G" style="left:883px;top:88px;width:126px;height:21px"></div>
<div class="t" style="top:91.75px;font-size:12.5px;color:#595959;font-weight:bold;-webkit-text-stroke:0.2px #595959;left:888px;">-</div>
<div class="a G" style="left:1010px;top:88px;width:126px;height:21px"></div>
<div class="t" style="top:91.75px;font-size:12.5px;color:#595959;font-weight:bold;-webkit-text-stroke:0.2px #595959;left:1015px;">-</div>
<div class="a G" style="left:1137px;top:88px;width:126px;height:21px"></div>
<div class="t" style="top:91.75px;font-size:12.5px;color:#595959;font-weight:bold;-webkit-text-stroke:0.2px #595959;left:1142px;">-</div>
<div class="a G" style="left:1264px;top:88px;width:126px;height:21px"></div>
<div class="t" style="top:91.75px;font-size:12.5px;color:#595959;font-weight:bold;-webkit-text-stroke:0.2px #595959;left:1269px;">-</div>
<div class="t b" style="top:92.00px;right:388.00px;font-size:12px;letter-spacing:1px;word-spacing:-1.4px;-webkit-text-stroke:0.25px #595959;color:#595959">324 081,26 €</div>
<div class="t b" style="top:92.00px;right:261.00px;font-size:12px;letter-spacing:1px;word-spacing:-1.4px;-webkit-text-stroke:0.25px #595959;color:#595959">340 806,52 €</div>
<div class="a G" style="left:1645px;top:88px;width:126px;height:21px"></div>
<div class="t" style="top:91.75px;font-size:12.5px;color:#595959;font-weight:bold;-webkit-text-stroke:0.2px #595959;left:1650px;">-</div>
<div class="t b" style="top:92.00px;right:9.00px;font-size:12px;letter-spacing:1px;word-spacing:-1.4px;-webkit-text-stroke:0.25px #595959;color:#595959">314 737,44 €</div>
<svg class="a" style="left:6.8px;top:114.8px" width="10.4" height="10.4" viewBox="0 0 11 11"><circle cx="5.5" cy="5.5" r="5.5" fill="#404040"/><path d="M5.5 2.4v6.2M2.4 5.5h6.2" stroke="#fff" stroke-width="1.6"/></svg>
<div class="t" style="top:113.75px;font-size:12.5px;color:#484848;letter-spacing:-0.1px;font-weight:bold;-webkit-text-stroke:0.2px #484848;left:29.9px;">Entreprise 18</div>
<div class="a N" style="left:502px;top:110px;width:126px;height:21px"></div>
<div class="t b" style="top:114.00px;right:1277.00px;font-size:12px;letter-spacing:1px;word-spacing:-1.4px;-webkit-text-stroke:0.25px #fff;color:#fff">4 468,79 €</div>
<div class="a G" style="left:629px;top:110px;width:126px;height:21px"></div>
<div class="t" style="top:113.75px;font-size:12.5px;color:#595959;font-weight:bold;-webkit-text-stroke:0.2px #595959;left:634px;">-</div>
<div class="a G" style="left:756px;top:110px;width:126px;height:21px"></div>
<div class="t" style="top:113.75px;font-size:12.5px;color:#595959;font-weight:bold;-webkit-text-stroke:0.2px #595959;left:761px;">-</div>
<div class="a G" style="left:883px;top:110px;width:126px;height:21px"></div>
<div class="t" style="top:113.75px;font-size:12.5px;color:#595959;font-weight:bold;-webkit-text-stroke:0.2px #595959;left:888px;">-</div>
<div class="t b" style="top:114.00px;right:769.00px;font-size:12px;letter-spacing:1px;word-spacing:-1.4px;-webkit-text-stroke:0.25px #595959;color:#595959">3 354,85 €</div>
<div class="t b" style="top:114.00px;right:642.00px;font-size:12px;letter-spacing:1px;word-spacing:-1.4px;-webkit-text-stroke:0.25px #595959;color:#595959">4 651,96 €</div>
<div class="a G" style="left:1264px;top:110px;width:126px;height:21px"></div>
<div class="t" style="top:113.75px;font-size:12.5px;color:#595959;font-weight:bold;-webkit-text-stroke:0.2px #595959;left:1269px;">-</div>
<div class="a G" style="left:1391px;top:110px;width:126px;height:21px"></div>
<div class="t" style="top:113.75px;font-size:12.5px;color:#595959;font-weight:bold;-webkit-text-stroke:0.2px #595959;left:1396px;">-</div>
<div class="a G" style="left:1518px;top:110px;width:126px;height:21px"></div>
<div class="t" style="top:113.75px;font-size:12.5px;color:#595959;font-weight:bold;-webkit-text-stroke:0.2px #595959;left:1523px;">-</div>
<div class="a G" style="left:1645px;top:110px;width:126px;height:21px"></div>
<div class="t" style="top:113.75px;font-size:12.5px;color:#595959;font-weight:bold;-webkit-text-stroke:0.2px #595959;left:1650px;">-</div>
<div class="t b" style="top:114.00px;right:9.00px;font-size:12px;letter-spacing:1px;word-spacing:-1.4px;-webkit-text-stroke:0.25px #595959;color:#595959">6 783,70 €</div>
<svg class="a" style="left:6.8px;top:136.8px" width="10.4" height="10.4" viewBox="0 0 11 11"><circle cx="5.5" cy="5.5" r="5.5" fill="#404040"/><path d="M5.5 2.4v6.2M2.4 5.5h6.2" stroke="#fff" stroke-width="1.6"/></svg>
<div class="t" style="top:135.75px;font-size:12.5px;color:#484848;letter-spacing:-0.1px;font-weight:bold;-webkit-text-stroke:0.2px #484848;left:29.9px;">Entreprise 19</div>
<div class="a N" style="left:502px;top:132px;width:126px;height:21px"></div>
<div class="t b" style="top:136.00px;right:1277.00px;font-size:12px;letter-spacing:1px;word-spacing:-1.4px;-webkit-text-stroke:0.25px #fff;color:#fff">7 803,55 €</div>
<div class="a G" style="left:629px;top:132px;width:126px;height:21px"></div>
<div class="t" style="top:135.75px;font-size:12.5px;color:#595959;font-weight:bold;-webkit-text-stroke:0.2px #595959;left:634px;">-</div>
<div class="a G" style="left:756px;top:132px;width:126px;height:21px"></div>
<div class="t" style="top:135.75px;font-size:12.5px;color:#595959;font-weight:bold;-webkit-text-stroke:0.2px #595959;left:761px;">-</div>
<div class="t b" style="top:136.00px;right:896.00px;font-size:12px;letter-spacing:1px;word-spacing:-1.4px;-webkit-text-stroke:0.25px #595959;color:#595959">4 583,33 €</div>
<div class="a G" style="left:1010px;top:132px;width:126px;height:21px"></div>
<div class="t" style="top:135.75px;font-size:12.5px;color:#595959;font-weight:bold;-webkit-text-stroke:0.2px #595959;left:1015px;">-</div>
<div class="t b" style="top:136.00px;right:642.00px;font-size:12px;letter-spacing:1px;word-spacing:-1.4px;-webkit-text-stroke:0.25px #595959;color:#595959">9 011,14 €</div>
<div class="a G" style="left:1264px;top:132px;width:126px;height:21px"></div>
<div class="t" style="top:135.75px;font-size:12.5px;color:#595959;font-weight:bold;-webkit-text-stroke:0.2px #595959;left:1269px;">-</div>
<div class="a G" style="left:1391px;top:132px;width:126px;height:21px"></div>
<div class="t" style="top:135.75px;font-size:12.5px;color:#595959;font-weight:bold;-webkit-text-stroke:0.2px #595959;left:1396px;">-</div>
<div class="a G" style="left:1518px;top:132px;width:126px;height:21px"></div>
<div class="t" style="top:135.75px;font-size:12.5px;color:#595959;font-weight:bold;-webkit-text-stroke:0.2px #595959;left:1523px;">-</div>
<div class="a G" style="left:1645px;top:132px;width:126px;height:21px"></div>
<div class="t" style="top:135.75px;font-size:12.5px;color:#595959;font-weight:bold;-webkit-text-stroke:0.2px #595959;left:1650px;">-</div>
<div class="a G" style="left:1772px;top:132px;width:126px;height:21px"></div>
<div class="t" style="top:135.75px;font-size:12.5px;color:#595959;font-weight:bold;-webkit-text-stroke:0.2px #595959;left:1777px;">-</div>
<svg class="a" style="left:6.8px;top:158.8px" width="10.4" height="10.4" viewBox="0 0 11 11"><circle cx="5.5" cy="5.5" r="5.5" fill="#404040"/><path d="M5.5 2.4v6.2M2.4 5.5h6.2" stroke="#fff" stroke-width="1.6"/></svg>
<div class="t" style="top:157.75px;font-size:12.5px;color:#484848;letter-spacing:-0.1px;font-weight:bold;-webkit-text-stroke:0.2px #484848;left:29.9px;">Entreprise 20</div>
<div class="a N" style="left:502px;top:154px;width:126px;height:21px"></div>
<div class="t b" style="top:158.00px;right:1277.00px;font-size:12px;letter-spacing:1px;word-spacing:-1.4px;-webkit-text-stroke:0.25px #fff;color:#fff">2 603,54 €</div>
<div class="a G" style="left:629px;top:154px;width:126px;height:21px"></div>
<div class="t" style="top:157.75px;font-size:12.5px;color:#595959;font-weight:bold;-webkit-text-stroke:0.2px #595959;left:634px;">-</div>
<div class="a R" style="left:756px;top:154px;width:126px;height:21px"></div>
<div class="t b" style="top:158.00px;right:1023.00px;font-size:12px;letter-spacing:1px;word-spacing:-1.4px;-webkit-text-stroke:0.25px #fff;color:#fff">1 113,91 €</div>
<div class="a R" style="left:883px;top:154px;width:126px;height:21px"></div>
<div class="t b" style="top:158.00px;right:896.00px;font-size:12px;letter-spacing:1px;word-spacing:-1.4px;-webkit-text-stroke:0.25px #fff;color:#fff">1 850,42 €</div>
<div class="a R" style="left:1010px;top:154px;width:126px;height:21px"></div>
<div class="t b" style="top:158.00px;right:769.00px;font-size:12px;letter-spacing:1px;word-spacing:-1.4px;-webkit-text-stroke:0.25px #fff;color:#fff">2 466,09 €</div>
<div class="a R" style="left:1137px;top:154px;width:126px;height:21px"></div>
<div class="t b" style="top:158.00px;right:642.00px;font-size:12px;letter-spacing:1px;word-spacing:-1.4px;-webkit-text-stroke:0.25px #fff;color:#fff">2 553,41 €</div>
<div class="t b" style="top:158.00px;right:515.00px;font-size:12px;letter-spacing:1px;word-spacing:-1.4px;-webkit-text-stroke:0.25px #595959;color:#595959">2 832,76 €</div>
<div class="t b" style="top:158.00px;right:388.00px;font-size:12px;letter-spacing:1px;word-spacing:-1.4px;-webkit-text-stroke:0.25px #595959;color:#595959">2 772,45 €</div>
<div class="t b" style="top:158.00px;right:261.00px;font-size:12px;letter-spacing:1px;word-spacing:-1.4px;-webkit-text-stroke:0.25px #595959;color:#595959">2 747,03 €</div>
<div class="a R" style="left:1645px;top:154px;width:126px;height:21px"></div>
<div class="t b" style="top:158.00px;right:134.00px;font-size:12px;letter-spacing:1px;word-spacing:-1.4px;-webkit-text-stroke:0.25px #fff;color:#fff">2 559,24 €</div>
<div class="a R" style="left:1772px;top:154px;width:126px;height:21px"></div>
<div class="t b" style="top:158.00px;right:9.00px;font-size:12px;letter-spacing:1px;word-spacing:-1.4px;-webkit-text-stroke:0.25px #fff;color:#fff">2 672,05 €</div>
<svg class="a" style="left:6.8px;top:180.8px" width="10.4" height="10.4" viewBox="0 0 11 11"><circle cx="5.5" cy="5.5" r="5.5" fill="#404040"/><path d="M5.5 2.4v6.2M2.4 5.5h6.2" stroke="#fff" stroke-width="1.6"/></svg>
<div class="t" style="top:179.75px;font-size:12.5px;color:#484848;letter-spacing:-0.1px;font-weight:bold;-webkit-text-stroke:0.2px #484848;left:29.9px;">Entreprise 21</div>
<div class="a N" style="left:502px;top:176px;width:126px;height:21px"></div>
<div class="t b" style="top:180.00px;right:1277.00px;font-size:12px;letter-spacing:1px;word-spacing:-1.4px;-webkit-text-stroke:0.25px #fff;color:#fff">3 340,05 €</div>
<div class="a G" style="left:629px;top:176px;width:126px;height:21px"></div>
<div class="t" style="top:179.75px;font-size:12.5px;color:#595959;font-weight:bold;-webkit-text-stroke:0.2px #595959;left:634px;">-</div>
<div class="a R" style="left:756px;top:176px;width:126px;height:21px"></div>
<div class="t b" style="top:180.00px;right:1023.00px;font-size:12px;letter-spacing:1px;word-spacing:-1.4px;-webkit-text-stroke:0.25px #fff;color:#fff">940,26 €</div>
<div class="a R" style="left:883px;top:176px;width:126px;height:21px"></div>
<div class="t b" style="top:180.00px;right:896.00px;font-size:12px;letter-spacing:1px;word-spacing:-1.4px;-webkit-text-stroke:0.25px #fff;color:#fff">1 905,49 €</div>
<div class="t b" style="top:180.00px;right:769.00px;font-size:12px;letter-spacing:1px;word-spacing:-1.4px;-webkit-text-stroke:0.25px #595959;color:#595959">3 079,97 €</div>
<div class="t b" style="top:180.00px;right:642.00px;font-size:12px;letter-spacing:1px;word-spacing:-1.4px;-webkit-text-stroke:0.25px #595959;color:#595959">3 650,12 €</div>
<div class="t b" style="top:180.00px;right:515.00px;font-size:12px;letter-spacing:1px;word-spacing:-1.4px;-webkit-text-stroke:0.25px #595959;color:#595959">3 906,09 €</div>
<div class="t b" style="top:180.00px;right:388.00px;font-size:12px;letter-spacing:1px;word-spacing:-1.4px;-webkit-text-stroke:0.25px #595959;color:#595959">3 896,43 €</div>
<div class="t b" style="top:180.00px;right:261.00px;font-size:12px;letter-spacing:1px;word-spacing:-1.4px;-webkit-text-stroke:0.25px #595959;color:#595959">4 251,03 €</div>
<div class="a R" style="left:1645px;top:176px;width:126px;height:21px"></div>
<div class="t b" style="top:180.00px;right:134.00px;font-size:12px;letter-spacing:1px;word-spacing:-1.4px;-webkit-text-stroke:0.25px #fff;color:#fff">2 506,97 €</div>
<div class="t b" style="top:180.00px;right:9.00px;font-size:12px;letter-spacing:1px;word-spacing:-1.4px;-webkit-text-stroke:0.25px #595959;color:#595959">2 829,28 €</div>
<svg class="a" style="left:6.8px;top:202.8px" width="10.4" height="10.4" viewBox="0 0 11 11"><circle cx="5.5" cy="5.5" r="5.5" fill="#404040"/><path d="M5.5 2.4v6.2M2.4 5.5h6.2" stroke="#fff" stroke-width="1.6"/></svg>
<div class="t" style="top:201.75px;font-size:12.5px;color:#484848;letter-spacing:-0.1px;font-weight:bold;-webkit-text-stroke:0.2px #484848;left:29.9px;">Entreprise 22</div>
<div class="a N" style="left:502px;top:198px;width:126px;height:21px"></div>
<div class="t b" style="top:202.00px;right:1277.00px;font-size:12px;letter-spacing:1px;word-spacing:-1.4px;-webkit-text-stroke:0.25px #fff;color:#fff">3 349,90 €</div>
<div class="a G" style="left:629px;top:198px;width:126px;height:21px"></div>
<div class="t" style="top:201.75px;font-size:12.5px;color:#595959;font-weight:bold;-webkit-text-stroke:0.2px #595959;left:634px;">-</div>
<div class="a R" style="left:756px;top:198px;width:126px;height:21px"></div>
<div class="t b" style="top:202.00px;right:1023.00px;font-size:12px;letter-spacing:1px;word-spacing:-1.4px;-webkit-text-stroke:0.25px #fff;color:#fff">1 800,00 €</div>
<div class="a R" style="left:883px;top:198px;width:126px;height:21px"></div>
<div class="t b" style="top:202.00px;right:896.00px;font-size:12px;letter-spacing:1px;word-spacing:-1.4px;-webkit-text-stroke:0.25px #fff;color:#fff">1 957,40 €</div>
<div class="a R" style="left:1010px;top:198px;width:126px;height:21px"></div>
<div class="t b" style="top:202.00px;right:769.00px;font-size:12px;letter-spacing:1px;word-spacing:-1.4px;-webkit-text-stroke:0.25px #fff;color:#fff">2 332,67 €</div>
<div class="a R" style="left:1137px;top:198px;width:126px;height:21px"></div>
<div class="t b" style="top:202.00px;right:642.00px;font-size:12px;letter-spacing:1px;word-spacing:-1.4px;-webkit-text-stroke:0.25px #fff;color:#fff">2 711,91 €</div>
<div class="a R" style="left:1264px;top:198px;width:126px;height:21px"></div>
<div class="t b" style="top:202.00px;right:515.00px;font-size:12px;letter-spacing:1px;word-spacing:-1.4px;-webkit-text-stroke:0.25px #fff;color:#fff">2 719,86 €</div>
<div class="t b" style="top:202.00px;right:388.00px;font-size:12px;letter-spacing:1px;word-spacing:-1.4px;-webkit-text-stroke:0.25px #595959;color:#595959">2 976,67 €</div>
<div class="t b" style="top:202.00px;right:261.00px;font-size:12px;letter-spacing:1px;word-spacing:-1.4px;-webkit-text-stroke:0.25px #595959;color:#595959">3 758,10 €</div>
<div class="t b" style="top:202.00px;right:134.00px;font-size:12px;letter-spacing:1px;word-spacing:-1.4px;-webkit-text-stroke:0.25px #595959;color:#595959">3 757,94 €</div>
<div class="t b" style="top:202.00px;right:9.00px;font-size:12px;letter-spacing:1px;word-spacing:-1.4px;-webkit-text-stroke:0.25px #595959;color:#595959">4 996,41 €</div>
<svg class="a" style="left:6.8px;top:224.8px" width="10.4" height="10.4" viewBox="0 0 11 11"><circle cx="5.5" cy="5.5" r="5.5" fill="#404040"/><path d="M5.5 2.4v6.2M2.4 5.5h6.2" stroke="#fff" stroke-width="1.6"/></svg>
<div class="t" style="top:223.75px;font-size:12.5px;color:#484848;letter-spacing:-0.1px;font-weight:bold;-webkit-text-stroke:0.2px #484848;left:29.9px;">Entreprise 23</div>
<div class="a N" style="left:502px;top:220px;width:126px;height:21px"></div>
<div class="t b" style="top:224.00px;right:1277.00px;font-size:12px;letter-spacing:1px;word-spacing:-1.4px;-webkit-text-stroke:0.25px #fff;color:#fff">4 624,91 €</div>
<div class="a G" style="left:629px;top:220px;width:126px;height:21px"></div>
<div class="t" style="top:223.75px;font-size:12.5px;color:#595959;font-weight:bold;-webkit-text-stroke:0.2px #595959;left:634px;">-</div>
<div class="a R" style="left:756px;top:220px;width:126px;height:21px"></div>
<div class="t b" style="top:224.00px;right:1023.00px;font-size:12px;letter-spacing:1px;word-spacing:-1.4px;-webkit-text-stroke:0.25px #fff;color:#fff">773,88 €</div>
<div class="a R" style="left:883px;top:220px;width:126px;height:21px"></div>
<div class="t b" style="top:224.00px;right:896.00px;font-size:12px;letter-spacing:1px;word-spacing:-1.4px;-webkit-text-stroke:0.25px #fff;color:#fff">1 957,92 €</div>
<div class="t b" style="top:224.00px;right:769.00px;font-size:12px;letter-spacing:1px;word-spacing:-1.4px;-webkit-text-stroke:0.25px #595959;color:#595959">3 515,92 €</div>
<div class="t b" style="top:224.00px;right:642.00px;font-size:12px;letter-spacing:1px;word-spacing:-1.4px;-webkit-text-stroke:0.25px #595959;color:#595959">4 333,00 €</div>
<div class="t b" style="top:224.00px;right:515.00px;font-size:12px;letter-spacing:1px;word-spacing:-1.4px;-webkit-text-stroke:0.25px #595959;color:#595959">4 936,77 €</div>
<div class="t b" style="top:224.00px;right:388.00px;font-size:12px;letter-spacing:1px;word-spacing:-1.4px;-webkit-text-stroke:0.25px #595959;color:#595959">6 009,95 €</div>
<div class="t b" style="top:224.00px;right:261.00px;font-size:12px;letter-spacing:1px;word-spacing:-1.4px;-webkit-text-stroke:0.25px #595959;color:#595959">5 945,45 €</div>
<div class="t b" style="top:224.00px;right:134.00px;font-size:12px;letter-spacing:1px;word-spacing:-1.4px;-webkit-text-stroke:0.25px #595959;color:#595959">4 547,51 €</div>
<div class="t b" style="top:224.00px;right:9.00px;font-size:12px;letter-spacing:1px;word-spacing:-1.4px;-webkit-text-stroke:0.25px #595959;color:#595959">6 673,94 €</div>
<svg class="a" style="left:6.8px;top:246.8px" width="10.4" height="10.4" viewBox="0 0 11 11"><circle cx="5.5" cy="5.5" r="5.5" fill="#404040"/><path d="M5.5 2.4v6.2M2.4 5.5h6.2" stroke="#fff" stroke-width="1.6"/></svg>
<div class="t" style="top:245.75px;font-size:12.5px;color:#484848;letter-spacing:-0.1px;font-weight:bold;-webkit-text-stroke:0.2px #484848;left:29.9px;">Entreprise 24</div>
<div class="a N" style="left:502px;top:242px;width:126px;height:21px"></div>
<div class="t b" style="top:246.00px;right:1277.00px;font-size:12px;letter-spacing:1px;word-spacing:-1.4px;-webkit-text-stroke:0.25px #fff;color:#fff">1 700,00 €</div>
<div class="a G" style="left:629px;top:242px;width:126px;height:21px"></div>
<div class="t" style="top:245.75px;font-size:12.5px;color:#595959;font-weight:bold;-webkit-text-stroke:0.2px #595959;left:634px;">-</div>
<div class="a G" style="left:756px;top:242px;width:126px;height:21px"></div>
<div class="t" style="top:245.75px;font-size:12.5px;color:#595959;font-weight:bold;-webkit-text-stroke:0.2px #595959;left:761px;">-</div>
<div class="a G" style="left:883px;top:242px;width:126px;height:21px"></div>
<div class="t" style="top:245.75px;font-size:12.5px;color:#595959;font-weight:bold;-webkit-text-stroke:0.2px #595959;left:888px;">-</div>
<div class="a G" style="left:1010px;top:242px;width:126px;height:21px"></div>
<div class="t" style="top:245.75px;font-size:12.5px;color:#595959;font-weight:bold;-webkit-text-stroke:0.2px #595959;left:1015px;">-</div>
<div class="a R" style="left:1137px;top:242px;width:126px;height:21px"></div>
<div class="t b" style="top:246.00px;right:642.00px;font-size:12px;letter-spacing:1px;word-spacing:-1.4px;-webkit-text-stroke:0.25px #fff;color:#fff">1 700,00 €</div>
<div class="a G" style="left:1264px;top:242px;width:126px;height:21px"></div>
<div class="t" style="top:245.75px;font-size:12.5px;color:#595959;font-weight:bold;-webkit-text-stroke:0.2px #595959;left:1269px;">-</div>
<div class="a G" style="left:1391px;top:242px;width:126px;height:21px"></div>
<div class="t" style="top:245.75px;font-size:12.5px;color:#595959;font-weight:bold;-webkit-text-stroke:0.2px #595959;left:1396px;">-</div>
<div class="a G" style="left:1518px;top:242px;width:126px;height:21px"></div>
<div class="t" style="top:245.75px;font-size:12.5px;color:#595959;font-weight:bold;-webkit-text-stroke:0.2px #595959;left:1523px;">-</div>
<div class="a G" style="left:1645px;top:242px;width:126px;height:21px"></div>
<div class="t" style="top:245.75px;font-size:12.5px;color:#595959;font-weight:bold;-webkit-text-stroke:0.2px #595959;left:1650px;">-</div>
<div class="a G" style="left:1772px;top:242px;width:126px;height:21px"></div>
<div class="t" style="top:245.75px;font-size:12.5px;color:#595959;font-weight:bold;-webkit-text-stroke:0.2px #595959;left:1777px;">-</div>
<svg class="a" style="left:6.8px;top:268.8px" width="10.4" height="10.4" viewBox="0 0 11 11"><circle cx="5.5" cy="5.5" r="5.5" fill="#404040"/><path d="M5.5 2.4v6.2M2.4 5.5h6.2" stroke="#fff" stroke-width="1.6"/></svg>
<div class="t" style="top:267.75px;font-size:12.5px;color:#484848;letter-spacing:-0.1px;font-weight:bold;-webkit-text-stroke:0.2px #484848;left:29.9px;">Entreprise 26</div>
<div class="a N" style="left:502px;top:264px;width:126px;height:21px"></div>
<div class="t b" style="top:268.00px;right:1277.00px;font-size:12px;letter-spacing:1px;word-spacing:-1.4px;-webkit-text-stroke:0.25px #fff;color:#fff">1 884,45 €</div>
<div class="a G" style="left:629px;top:264px;width:126px;height:21px"></div>
<div class="t" style="top:267.75px;font-size:12.5px;color:#595959;font-weight:bold;-webkit-text-stroke:0.2px #595959;left:634px;">-</div>
<div class="a R" style="left:756px;top:264px;width:126px;height:21px"></div>
<div class="t b" style="top:268.00px;right:1023.00px;font-size:12px;letter-spacing:1px;word-spacing:-1.4px;-webkit-text-stroke:0.25px #fff;color:#fff">1 413,04 €</div>
<div class="a R" style="left:883px;top:264px;width:126px;height:21px"></div>
<div class="t b" style="top:268.00px;right:896.00px;font-size:12px;letter-spacing:1px;word-spacing:-1.4px;-webkit-text-stroke:0.25px #fff;color:#fff">1 488,62 €</div>
<div class="a R" style="left:1010px;top:264px;width:126px;height:21px"></div>
<div class="t b" style="top:268.00px;right:769.00px;font-size:12px;letter-spacing:1px;word-spacing:-1.4px;-webkit-text-stroke:0.25px #fff;color:#fff">1 715,19 €</div>
<div class="a R" style="left:1137px;top:264px;width:126px;height:21px"></div>
<div class="t b" style="top:268.00px;right:642.00px;font-size:12px;letter-spacing:1px;word-spacing:-1.4px;-webkit-text-stroke:0.25px #fff;color:#fff">1 871,52 €</div>
<div class="a R" style="left:1264px;top:264px;width:126px;height:21px"></div>
<div class="t b" style="top:268.00px;right:515.00px;font-size:12px;letter-spacing:1px;word-spacing:-1.4px;-webkit-text-stroke:0.25px #fff;color:#fff">1 813,56 €</div>
<div class="a R" style="left:1391px;top:264px;width:126px;height:21px"></div>
<div class="t b" style="top:268.00px;right:388.00px;font-size:12px;letter-spacing:1px;word-spacing:-1.4px;-webkit-text-stroke:0.25px #fff;color:#fff">2 023,60 €</div>
<div class="a R" style="left:1518px;top:264px;width:126px;height:21px"></div>
<div class="t b" style="top:268.00px;right:261.00px;font-size:12px;letter-spacing:1px;word-spacing:-1.4px;-webkit-text-stroke:0.25px #fff;color:#fff">2 050,33 €</div>
<div class="a R" style="left:1645px;top:264px;width:126px;height:21px"></div>
<div class="t b" style="top:268.00px;right:134.00px;font-size:12px;letter-spacing:1px;word-spacing:-1.4px;-webkit-text-stroke:0.25px #fff;color:#fff">2 057,62 €</div>
<div class="a R" style="left:1772px;top:264px;width:126px;height:21px"></div>
<div class="t b" style="top:268.00px;right:9.00px;font-size:12px;letter-spacing:1px;word-spacing:-1.4px;-webkit-text-stroke:0.25px #fff;color:#fff">2 190,09 €</div>
<div class="hl" style="left:502px;top:0;width:1396px;background:#e6e6e6"></div>
<div class="hl" style="left:0;top:21px;width:1898px;background:#e6e6e6"></div>
<div class="hl" style="left:0;top:43px;width:1898px;background:#e6e6e6"></div>
<div class="hl" style="left:0;top:65px;width:1898px;background:#e6e6e6"></div>
<div class="hl" style="left:0;top:87px;width:1898px;background:#e6e6e6"></div>
<div class="hl" style="left:0;top:109px;width:1898px;background:#e6e6e6"></div>
<div class="hl" style="left:0;top:131px;width:1898px;background:#e6e6e6"></div>
<div class="hl" style="left:0;top:153px;width:1898px;background:#e6e6e6"></div>
<div class="hl" style="left:0;top:175px;width:1898px;background:#e6e6e6"></div>
<div class="hl" style="left:0;top:197px;width:1898px;background:#e6e6e6"></div>
<div class="hl" style="left:0;top:219px;width:1898px;background:#e6e6e6"></div>
<div class="hl" style="left:0;top:241px;width:1898px;background:#e6e6e6"></div>
<div class="hl" style="left:0;top:263px;width:1898px;background:#e6e6e6"></div>
<div class="hl" style="left:0;top:285px;width:1898px;background:#e6e6e6"></div>
<div class="vl" style="left:501px;top:1px;height:276px;background:#d4d4d4"></div>
<div class="vl" style="left:628px;top:0;height:276px;background:#e6e6e6"></div>
<div class="vl" style="left:755px;top:0;height:276px;background:#e6e6e6"></div>
<div class="vl" style="left:882px;top:0;height:276px;background:#e6e6e6"></div>
<div class="vl" style="left:1009px;top:0;height:276px;background:#e6e6e6"></div>
<div class="vl" style="left:1136px;top:0;height:276px;background:#e6e6e6"></div>
<div class="vl" style="left:1263px;top:0;height:276px;background:#e6e6e6"></div>
<div class="vl" style="left:1390px;top:0;height:276px;background:#e6e6e6"></div>
<div class="vl" style="left:1517px;top:0;height:276px;background:#e6e6e6"></div>
<div class="vl" style="left:1644px;top:0;height:276px;background:#e6e6e6"></div>
<div class="vl" style="left:1771px;top:0;height:276px;background:#e6e6e6"></div>
<div class="vl" style="left:1898px;top:0;height:276px;background:#e6e6e6"></div>
<div class="a" style="left:502px;bottom:0;width:1396px;height:9px;background:linear-gradient(to bottom,rgba(0,0,0,0),rgba(0,0,0,0.08))"></div>
<div class="a" style="right:0;top:0;width:10px;height:276px;background:linear-gradient(to right,rgba(0,0,0,0),rgba(0,0,0,0.08))"></div>
</div>
<div class="t" style="top:946.25px;font-size:11.5px;color:#737373;letter-spacing:0.03px;font-style:italic;left:10px;">En rouge sont indiqués les salaires de base moyens ramenés à l'équivalent temps plein inférieurs au salaire de base moyen 2 747 €</div>
</body></html>
